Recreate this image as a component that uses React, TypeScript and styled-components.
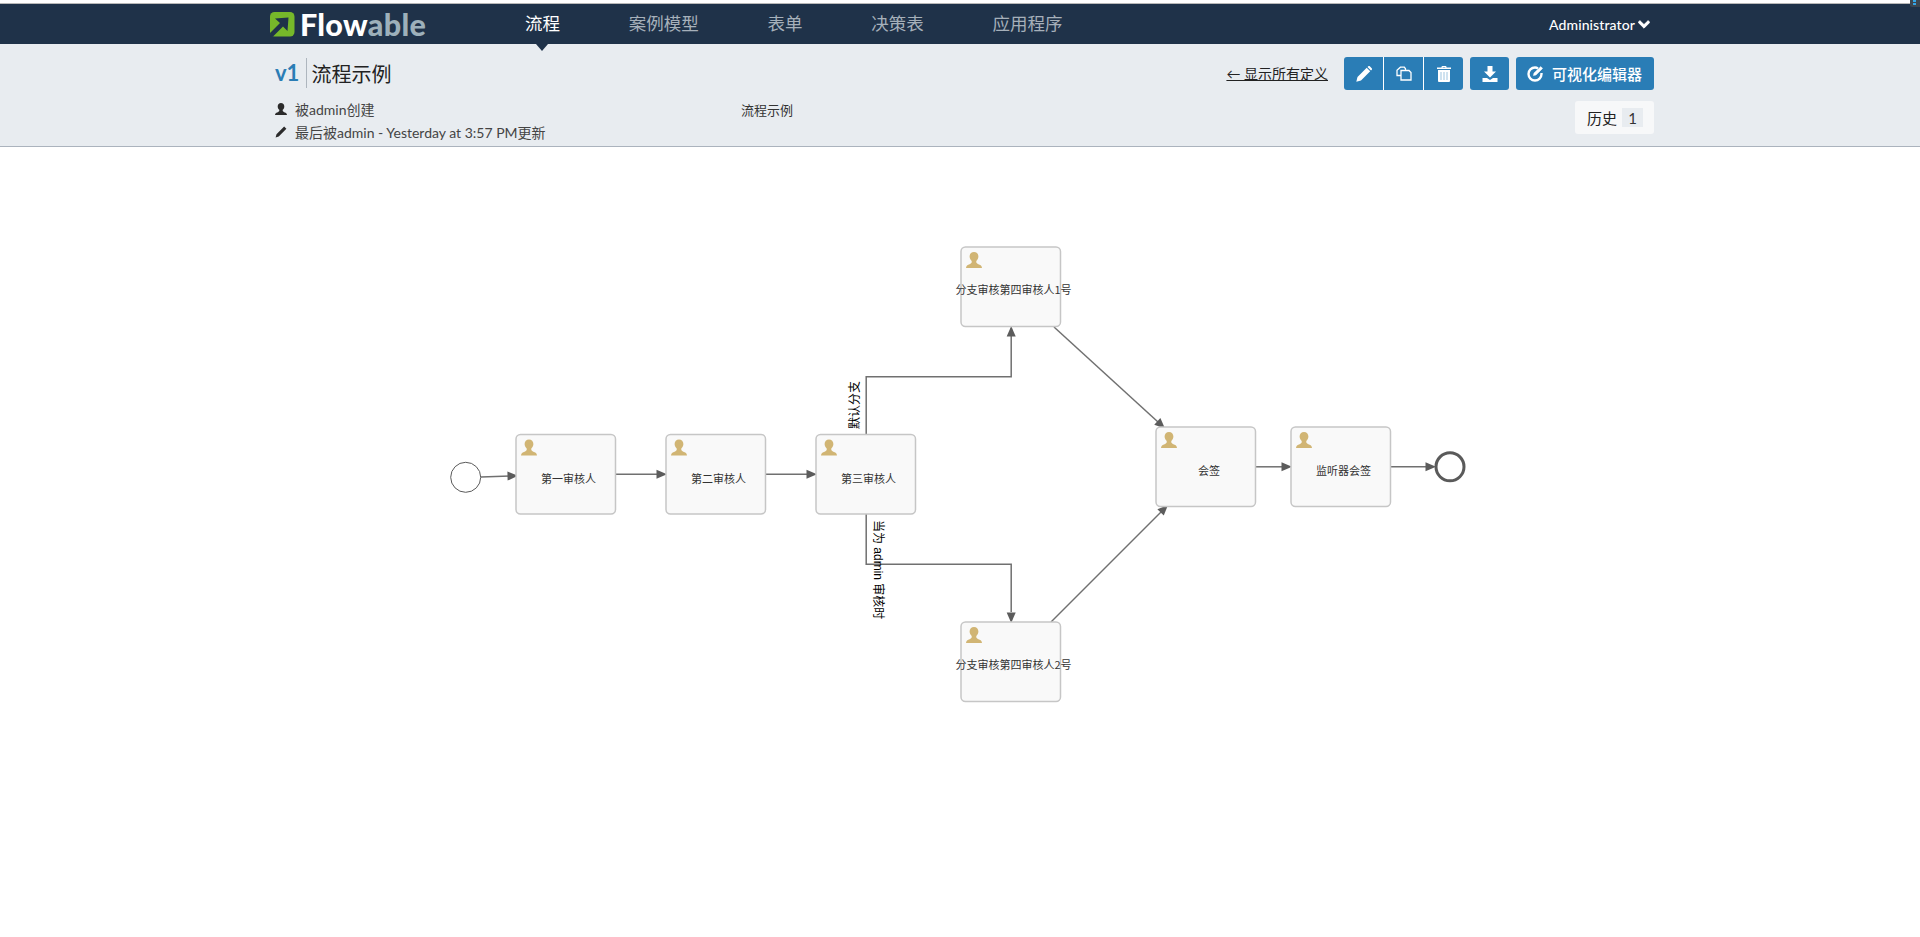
import React from "react";
import styled, { createGlobalStyle } from "styled-components";

const CJK = `Lato, "Noto Sans CJK SC", sans-serif`;

const Global = createGlobalStyle`
  html, body { margin: 0; padding: 0; background: #fff; overflow: hidden; }
  body { font-family: ${CJK}; color: #333; font-size: 14px; }
`;

const Page = styled.div`
  position: relative;
  height: 937px;
  padding-top: 3px;
  box-sizing: border-box;
`;

const CornerWidget = styled.div`
  position: absolute;
  top: 0;
  right: 0;
  width: 10px;
  height: 7px;
  background: #3d4650;
  border-radius: 0 0 0 2px;
  &::after {
    content: "";
    position: absolute;
    left: 3px;
    top: 0;
    width: 3px;
    height: 5px;
    background: repeating-linear-gradient(#35a7e8 0 2px, #3d4650 2px 3px);
  }
`;

const TopBar = styled.header`
  display: flex;
  align-items: center;
  height: 40px;
  padding: 0 270px;
  background: #1f3249;
  border-top: 1px solid #b8b8b8;
`;

const Logo = styled.div`
  display: flex;
  align-items: center;
  gap: 5px;
  width: 155px;
  height: 40px;
  flex: none;
`;

const LogoWord = styled.span`
  font-family: Lato, sans-serif;
  font-weight: 900;
  font-size: 30.5px;
  line-height: 40px;
  letter-spacing: 0.3px;
  color: #fff;
`;

const LogoTail = styled.span`
  color: #9db0ba;
`;

const NavList = styled.nav`
  display: flex;
  margin-left: 65.6px;
`;

const NavItem = styled.div<{ $active?: boolean }>`
  position: relative;
  padding: 0 34.4px;
  font-size: 17.5px;
  line-height: 40px;
  color: ${(p) => (p.$active ? "#fff" : "#a6b0ba")};
  ${(p) =>
    p.$active &&
    `&::after {
      content: "";
      position: absolute;
      left: 50%;
      top: 40px;
      margin-left: -6px;
      border-left: 6px solid transparent;
      border-right: 6px solid transparent;
      border-top: 7px solid #1f3249;
    }`}
`;

const UserMenu = styled.div`
  display: flex;
  align-items: center;
  gap: 3px;
  margin-left: auto;
  color: #fff;
  font-size: 14px;
  font-weight: 500;
  letter-spacing: 0.1px;
`;

const SubHeader = styled.section`
  display: grid;
  grid-template-columns: 466px 1fr auto;
  height: 102px;
  box-sizing: content-box;
  padding: 0 266px 0 275px;
  background: #e8ecf0;
  border-bottom: 1px solid #abb3bd;
`;

const LeftColumn = styled.div`
  padding-top: 14px;
`;

const TitleRow = styled.div`
  display: flex;
  align-items: center;
  height: 30px;
  margin-bottom: 9px;
`;

const Version = styled.span`
  font-size: 22px;
  font-weight: 700;
  color: #2b7db5;
  padding-right: 7px;
  line-height: 30px;
  border-right: 1px solid #aeb6be;
`;

const Title = styled.h1`
  margin: 2px 0 0 4px;
  font-size: 20px;
  font-weight: 400;
  line-height: 30px;
  color: #222;
`;

const MetaRow = styled.div`
  display: flex;
  align-items: center;
  gap: 8px;
  height: 23px;
  font-size: 14px;
  color: #444;
`;

const MetaIcon = styled.svg`
  width: 12px;
  height: 12px;
  fill: #2b2b2b;
  flex: none;
`;

const Description = styled.div`
  padding-top: 55px;
  font-size: 13px;
  line-height: 23px;
  color: #333;
`;

const RightColumn = styled.div`
  display: flex;
  flex-direction: column;
  align-items: flex-end;
  padding-top: 13px;
`;

const Toolbar = styled.div`
  display: flex;
  align-items: center;
  gap: 7px;
`;

const BackLink = styled.a`
  margin-right: 9px;
  font-size: 14px;
  line-height: 20px;
  color: #222;
  text-decoration: underline;
`;

const ButtonGroup = styled.div`
  display: flex;
  border-radius: 3px;
  overflow: hidden;
`;

const IconButton = styled.button<{ $sep?: boolean }>`
  display: flex;
  align-items: center;
  justify-content: center;
  width: ${(p) => (p.$sep ? "40px" : "39px")};
  height: 33px;
  padding: 0;
  border: 0;
  border-left: ${(p) => (p.$sep ? "1px solid #fff" : "0")};
  border-radius: ${(p) => (p.$sep === undefined ? "3px" : "0")};
  background: #2a7db6;
  color: #fff;
`;

const TextButton = styled.button`
  display: flex;
  align-items: center;
  gap: 9px;
  width: 138px;
  height: 33px;
  padding: 0 0 0 11px;
  border: 0;
  border-radius: 3px;
  background: #2a7db6;
  color: #fff;
  font-family: ${CJK};
  font-size: 15px;
  font-weight: 500;
`;

const BtnIcon = styled.svg`
  width: 16px;
  height: 16px;
  flex: none;
`;

const HistoryBox = styled.div`
  display: flex;
  align-items: center;
  gap: 5px;
  width: 79px;
  height: 33px;
  margin-top: 11px;
  padding-left: 12px;
  box-sizing: border-box;
  background: #f7f8f9;
  border-radius: 3px;
  font-size: 15px;
  color: #222;
`;

const HistoryCount = styled.span`
  display: flex;
  align-items: center;
  justify-content: center;
  width: 21px;
  height: 19px;
  background: #e8ecf0;
  color: #333;
`;

const Canvas = styled.svg`
  display: block;
  width: 1920px;
  height: 790px;
`;

const TaskBox = styled.rect`
  fill: #f9f9f9;
  stroke: #c6c6c6;
  stroke-width: 1.5;
`;

const TaskLabel = styled.text`
  font-family: "Noto Sans CJK SC", sans-serif;
  font-size: 11px;
  fill: #333;
  text-anchor: middle;
  dominant-baseline: central;
`;

const EdgeLabel = styled.text`
  font-family: "Liberation Sans", "Noto Sans CJK SC", sans-serif;
  font-size: 12px;
  fill: #000;
`;

const Edge = styled.polyline`
  fill: none;
  stroke: #707070;
  stroke-width: 1.5;
`;

const Arrow = styled.polygon`
  fill: #5c5c5c;
`;

const Circle = styled.circle<{ $end?: boolean }>`
  fill: #fff;
  stroke: #5a5a5a;
  stroke-width: ${(p) => (p.$end ? 3 : 1)};
`;

const tasks = [
  { x: 516, y: 434.5, label: "第一审核人", dx: 52.5, dy: 43 },
  { x: 666, y: 434.5, label: "第二审核人", dx: 52.5, dy: 43 },
  { x: 816, y: 434.5, label: "第三审核人", dx: 52.5, dy: 43 },
  { x: 961, y: 247, label: "分支审核第四审核人1号", dx: 52.5, dy: 42 },
  { x: 961, y: 622, label: "分支审核第四审核人2号", dx: 52.5, dy: 42 },
  { x: 1156, y: 427, label: "会签", dx: 53, dy: 43 },
  { x: 1291, y: 427, label: "监听器会签", dx: 52.5, dy: 43 },
];

const edges = [
  { pts: [[481, 477], [510, 476]], tip: [518, 475.8] },
  { pts: [[616, 474.2], [660, 474.2]], tip: [667, 474.2] },
  { pts: [[766, 474.2], [810, 474.2]], tip: [817, 474.2] },
  { pts: [[866.2, 434], [866.2, 376.8], [1011.2, 376.8], [1011.2, 335]], tip: [1011.2, 326] },
  { pts: [[866.2, 514], [866.2, 564.3], [1011.2, 564.3], [1011.2, 612]], tip: [1011.2, 623] },
  { pts: [[1054, 327], [1158, 422]], tip: [1165, 428.5] },
  { pts: [[1051, 622], [1161, 512]], tip: [1168, 505] },
  { pts: [[1256, 466.8], [1283, 466.8]], tip: [1292, 466.8] },
  { pts: [[1391, 466.8], [1428, 466.8]], tip: [1436, 466.8] },
];

function arrowHead(edge: { pts: number[][]; tip: number[] }) {
  const from = edge.pts[edge.pts.length - 1];
  const [tx, ty] = edge.tip;
  const a = Math.atan2(ty - from[1], tx - from[0]);
  const len = 10.5;
  const half = 4.5;
  const bx = tx - Math.cos(a) * len;
  const by = ty - Math.sin(a) * len;
  const nx = -Math.sin(a) * half;
  const ny = Math.cos(a) * half;
  return `${tx},${ty} ${bx + nx},${by + ny} ${bx - nx},${by - ny}`;
}

const UserGlyph = () => (
  <path d="M8 0C5.4 0 3.6 1.9 3.6 4.6c0 1.9.9 3.4 2.1 4.4v1.6C5 11.8 3.4 12.5 1.8 13.1.6 13.7.2 14.7 0 16h16c-.2-1.3-.6-2.3-1.8-2.9-1.6-.6-3.2-1.3-3.9-2.5V9c1.2-1 2.1-2.5 2.1-4.4C12.4 1.9 10.6 0 8 0z" />
);

export default function App() {
  return (
    <Page>
      <Global />
      <CornerWidget />
      <TopBar>
        <Logo>
          <svg width="25" height="25" viewBox="0 0 25 25" style={{ flex: "none" }}>
            <rect x="0" y="0" width="24.5" height="24.5" rx="4.5" fill="#76b82a" />
            <path d="M0.5 24.5 L3 24.5 L13 14.5 L17.5 19 L18.5 5.5 L5 6.5 L10 11 L0 21 Z" fill="#1f3249" />
          </svg>
          <LogoWord>
            Flow<LogoTail>able</LogoTail>
          </LogoWord>
        </Logo>
        <NavList>
          <NavItem $active>流程</NavItem>
          <NavItem>案例模型</NavItem>
          <NavItem>表单</NavItem>
          <NavItem>决策表</NavItem>
          <NavItem>应用程序</NavItem>
        </NavList>
        <UserMenu>
          Administrator
          <svg width="12" height="9" viewBox="0 0 12 9">
            <path d="M1.8 0.6 L6 4.6 L10.2 0.6 L11.8 2.4 L6 8.2 L0.2 2.4 Z" fill="#fff" stroke="#fff" strokeWidth="0.8" />
          </svg>
        </UserMenu>
      </TopBar>

      <SubHeader>
        <LeftColumn>
          <TitleRow>
            <Version>v1</Version>
            <Title>流程示例</Title>
          </TitleRow>
          <MetaRow>
            <MetaIcon viewBox="0 0 16 16">
              <UserGlyph />
            </MetaIcon>
            被admin创建
          </MetaRow>
          <MetaRow>
            <MetaIcon viewBox="0 0 16 16">
              <path d="M12.2 0.8 L15.2 3.8 L5 14 L0.8 15.2 L2 11 Z M11 4 L12 5" />
            </MetaIcon>
            最后被admin - Yesterday at 3:57 PM更新
          </MetaRow>
        </LeftColumn>
        <Description>流程示例</Description>
        <RightColumn>
          <Toolbar>
            <BackLink>← 显示所有定义</BackLink>
            <ButtonGroup>
              <IconButton $sep={false}>
                <BtnIcon viewBox="0 0 16 16" fill="#fff">
                  <path d="M11.5 1 L12.6 0 Q13.2-.2 13.8.3 L15.7 2.2 Q16.2 2.8 16 3.4 L15 4.5 Z M10.7 1.8 L14.2 5.3 L5 14.5 L.3 15.7 L1.5 11 Z" />
                </BtnIcon>
              </IconButton>
              <IconButton $sep>
                <BtnIcon viewBox="0 0 16 16" fill="none" stroke="#fff" strokeWidth="1.3">
                  <path d="M9.5 4.5 V2.8 L8.3 1.2 H4.4 L1 4.2 V9.5 H5" />
                  <path d="M5 4.5 H13 L15 6.5 V14 H5 Z" />
                </BtnIcon>
              </IconButton>
              <IconButton $sep>
                <BtnIcon viewBox="0 0 16 16" fill="#fff">
                  <path d="M5.5 1 Q5.5 0 6.5 0 H9.5 Q10.5 0 10.5 1 V1.5 H15 V3 H1 V1.5 H5.5 Z M6.7 1 V1.5 H9.3 V1 Z M2 4 H14 V15 Q14 16 13 16 H3 Q2 16 2 15 Z" fillRule="evenodd" />
                  <path d="M5 6 V14 M8 6 V14 M11 6 V14" stroke="#9fc5e0" strokeWidth="1" />
                </BtnIcon>
              </IconButton>
            </ButtonGroup>
            <IconButton>
              <BtnIcon viewBox="0 0 16 16" fill="#fff">
                <path d="M5.5 0 H10.5 V5.5 H14 L8 11.5 L2 5.5 H5.5 Z M0.5 12 H5 L8 14 L11 12 H15.5 V16 H0.5 Z" />
              </BtnIcon>
            </IconButton>
            <TextButton>
              <BtnIcon viewBox="0 0 16 16" fill="none" stroke="#fff">
                <path d="M11 2.4 Q9.6 1.5 8 1.5 A6.5 6.5 0 1 0 14.5 8 V7" strokeWidth="2.4" />
                <path d="M13.8 0.6 L15.6 2.4 L9 9 L6.4 9.6 L7 7 Z" fill="#fff" strokeWidth="0.5" />
              </BtnIcon>
              可视化编辑器
            </TextButton>
          </Toolbar>
          <HistoryBox>
            历史
            <HistoryCount>1</HistoryCount>
          </HistoryBox>
        </RightColumn>
      </SubHeader>

      <Canvas viewBox="0 147 1920 790">
        {edges.map((e, i) => (
          <Edge key={i} points={e.pts.map((p) => p.join(",")).join(" ")} />
        ))}
        {edges.map((e, i) => (
          <Arrow key={i} points={arrowHead(e)} />
        ))}
        <Circle cx={465.7} cy={477.3} r={15} />
        <Circle $end cx={1450} cy={466.8} r={14} />
        {tasks.map((t) => (
          <g key={t.label}>
            <TaskBox x={t.x} y={t.y} width={99.5} height={79.5} rx={4.5} />
            <g transform={`translate(${t.x + 5} ${t.y + 5})`} fill="#d1b574">
              <UserGlyph />
            </g>
            <TaskLabel x={t.x + t.dx} y={t.y + t.dy}>
              {t.label}
            </TaskLabel>
          </g>
        ))}
        <EdgeLabel transform="translate(859 429) rotate(-90)">默认分支</EdgeLabel>
        <EdgeLabel transform="translate(874 520) rotate(90)">当为 admin 审核时</EdgeLabel>
      </Canvas>
    </Page>
  );
}
